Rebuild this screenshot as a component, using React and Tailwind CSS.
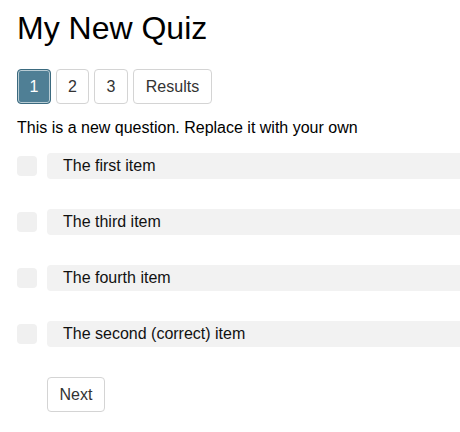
import React from "react";

const items = ["The first item", "The third item", "The fourth item", "The second (correct) item"];

export default function App() {
  const pages = [
    { label: "1", w: "w-[34px]", active: true },
    { label: "2", w: "w-[33px]" },
    { label: "3", w: "w-[34px]" },
    { label: "Results", w: "w-[79px]" },
  ];
  return (
    <div className="min-h-screen bg-white pl-[17px] font-['Liberation_Sans',Arial,sans-serif] text-black">
      <h1 className="pt-[10px] text-[32px] leading-[37px]">My New Quiz</h1>

      {/* page tabs */}
      <div className="mt-[22px] flex gap-[5px]">
        {pages.map((p) =>
          p.active ? (
            <button
              key={p.label}
              className={`${p.w} h-[35px] rounded-[4px] border border-[#3b6a7f] bg-[#4f7f95] text-[16px] text-white shadow-[inset_0_0_0_1px_#ffffff99]`}
            >
              {p.label}
            </button>
          ) : (
            <button
              key={p.label}
              className={`${p.w} h-[35px] rounded-[4px] border border-[#d4d4d4] bg-white text-[16px] text-[#333]`}
            >
              {p.label}
            </button>
          )
        )}
      </div>

      <p className="mt-[15px] text-[16px] leading-[18px]">This is a new question. Replace it with your own</p>

      {/* answer list */}
      <div className="mt-[16px] flex flex-col gap-[30px]">
        {items.map((t) => (
          <div key={t} className="flex items-center gap-[10px]">
            <div className="h-[20px] w-[20px] shrink-0 rounded-[4px] bg-[#f0f0f0]" />
            <div className="flex h-[26px] flex-1 items-center rounded-l-[4px] bg-[#f2f2f2] pl-[16px] text-[16px] text-[#111]">
              {t}
            </div>
          </div>
        ))}
      </div>

      <button className="ml-[30px] mt-[30px] h-[35px] w-[58px] rounded-[4px] border border-[#d4d4d4] bg-white text-[16px] text-[#333]">
        Next
      </button>
    </div>
  );
}
